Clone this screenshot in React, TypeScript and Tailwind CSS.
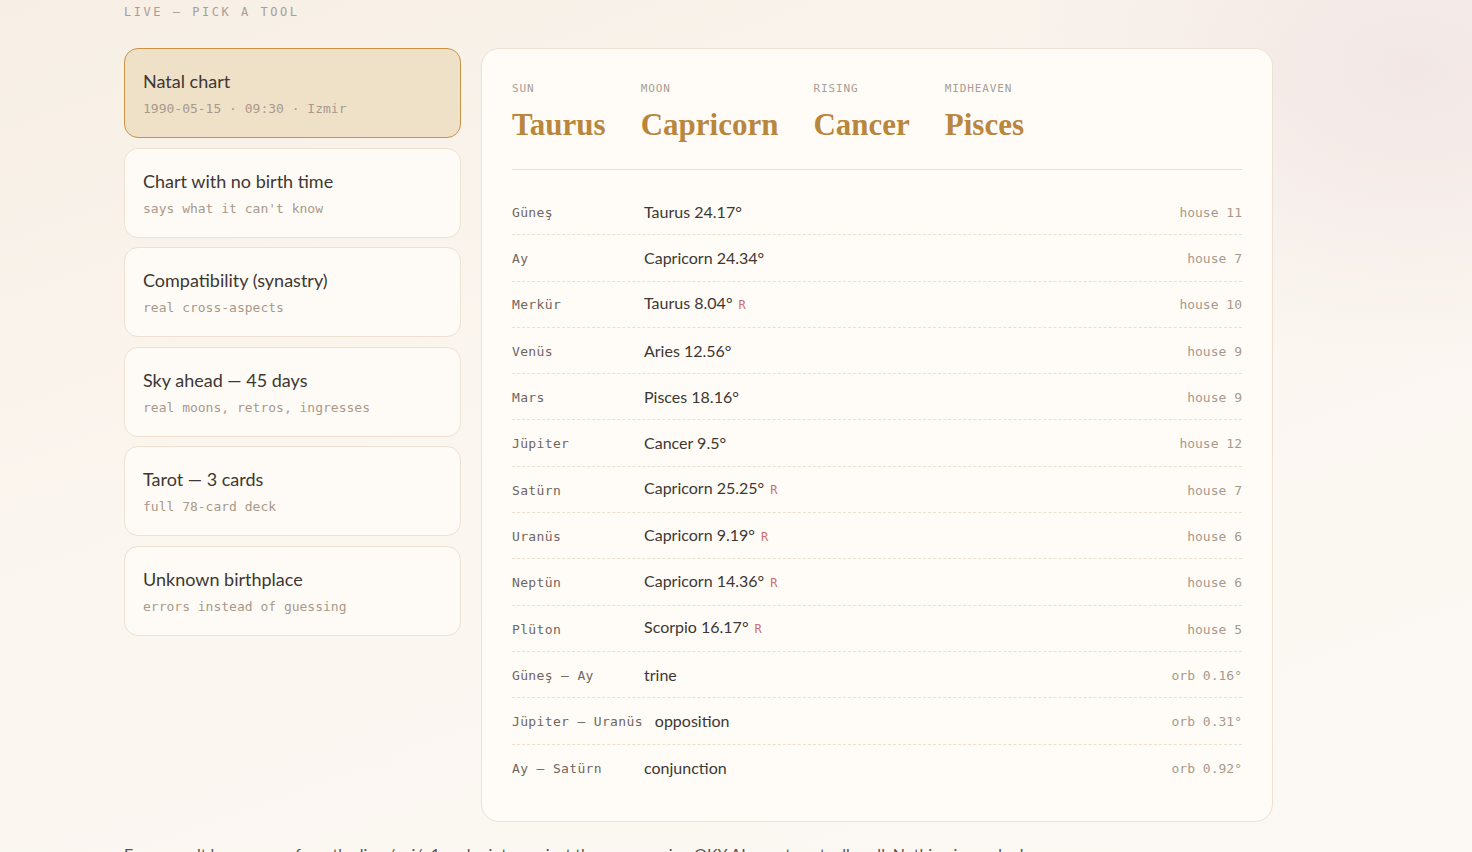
const sans = "font-['Lato','Noto_Sans',sans-serif]";
const mono = "font-['DejaVu_Sans_Mono','Liberation_Mono',monospace]";
const serif = "font-['Liberation_Serif','DejaVu_Serif',serif]";

type Tool = { title: string; sub: string; active?: boolean };

const tools: Tool[] = [
  { title: 'Natal chart', sub: '1990-05-15 · 09:30 · Izmir', active: true },
  { title: 'Chart with no birth time', sub: "says what it can't know" },
  { title: 'Compatibility (synastry)', sub: 'real cross-aspects' },
  { title: 'Sky ahead — 45 days', sub: 'real moons, retros, ingresses' },
  { title: 'Tarot — 3 cards', sub: 'full 78-card deck' },
  { title: 'Unknown birthplace', sub: 'errors instead of guessing' },
];

const bigFour = [
  { label: 'SUN', sign: 'Taurus' },
  { label: 'MOON', sign: 'Capricorn' },
  { label: 'RISING', sign: 'Cancer' },
  { label: 'MIDHEAVEN', sign: 'Pisces' },
];

type Row = { name: string; value: string; retro?: boolean; meta: string };

const rows: Row[] = [
  { name: 'Güneş', value: 'Taurus 24.17°', meta: 'house 11' },
  { name: 'Ay', value: 'Capricorn 24.34°', meta: 'house 7' },
  { name: 'Merkür', value: 'Taurus 8.04°', retro: true, meta: 'house 10' },
  { name: 'Venüs', value: 'Aries 12.56°', meta: 'house 9' },
  { name: 'Mars', value: 'Pisces 18.16°', meta: 'house 9' },
  { name: 'Jüpiter', value: 'Cancer 9.5°', meta: 'house 12' },
  { name: 'Satürn', value: 'Capricorn 25.25°', retro: true, meta: 'house 7' },
  { name: 'Uranüs', value: 'Capricorn 9.19°', retro: true, meta: 'house 6' },
  { name: 'Neptün', value: 'Capricorn 14.36°', retro: true, meta: 'house 6' },
  { name: 'Plüton', value: 'Scorpio 16.17°', retro: true, meta: 'house 5' },
  { name: 'Güneş – Ay', value: 'trine', meta: 'orb 0.16°' },
  { name: 'Jüpiter – Uranüs', value: 'opposition', meta: 'orb 0.31°' },
  { name: 'Ay – Satürn', value: 'conjunction', meta: 'orb 0.92°' },
];

export default function App() {
  return (
    <div className="min-h-[852px] w-full overflow-hidden bg-[#fcf8f3] bg-[radial-gradient(ellipse_420px_300px_at_96%_8%,#f2e7e5_0%,transparent_100%),linear-gradient(160deg,#f7efe5_0%,#fbf6f0_45%,#fcf8f3_100%)]">
      <div className="mx-auto w-[1224px]">
        <div className={`${mono} pt-[4px] text-[12px] leading-[16px] tracking-[0.21em] text-[#a99e94]`}>
          LIVE — PICK A TOOL
        </div>

        <div className="mt-[28px] grid grid-cols-[337px_792px] gap-5 items-start">
          <div className="flex flex-col gap-[9.6px]">
            {tools.map((t) => (
              <div
                key={t.title}
                className={`h-[90px] rounded-[14px] border px-[18px] pt-[19px] ${
                  t.active ? 'border-[#c99345] bg-[#efe1c8]' : 'border-[#ede1d2] bg-[#fefbf6]'
                }`}
              >
                <div className={`${sans} text-[18px] leading-[26px] text-[#3d3733]`}>{t.title}</div>
                <div className={`${mono} mt-[6px] text-[13px] leading-[18px] text-[#a8998b]`}>{t.sub}</div>
              </div>
            ))}
          </div>

          <div className="h-[774px] rounded-[18px] border border-[#ece1d3] bg-[#fffcf8] px-[30px] pt-[32px]">
            <div className="flex gap-[35px] border-b border-[#e9ded1] pb-[24px]">
              {bigFour.map((b) => (
                <div key={b.label} className="flex flex-col">
                  <div className={`${mono} text-[11px] leading-[16px] tracking-[0.08em] text-[#a99e94]`}>{b.label}</div>
                  <div className={`${serif} mt-[8px] text-[31px] font-bold leading-[40px] text-[#b9863d]`}>{b.sign}</div>
                </div>
              ))}
            </div>

            <div className="mt-[19px] flex flex-col">
              {rows.map((r, i) => (
                <div
                  key={r.name}
                  className={`flex h-[46.3px] items-center ${
                    i < rows.length - 1 ? 'border-b border-dashed border-[#ebe0cf]' : ''
                  }`}
                >
                  <div className={`${mono} mr-3 mt-[2px] min-w-[120px] whitespace-nowrap text-[13px] tracking-[0.35px] text-[#6f6660]`}>
                    {r.name}
                  </div>
                  <div className={`${sans} flex items-baseline gap-[6px] text-[16px] leading-[22px] text-[#3d3733]`}>
                    <span>{r.value}</span>
                    {r.retro && <span className={`${mono} text-[12px] text-[#c96f6f]`}>R</span>}
                  </div>
                  <div className={`${mono} ml-auto mt-[2px] text-[13px] text-[#a8998b]`}>{r.meta}</div>
                </div>
              ))}
            </div>
          </div>
        </div>

        <p className={`${sans} mt-[20px] text-[16px] leading-[24px] text-[#5a524c]`}>
          Every result here comes from the live /api/v1 endpoints, against the same engine OKY AI uses to actually call. Nothing is mocked.
        </p>
      </div>
    </div>
  );
}
